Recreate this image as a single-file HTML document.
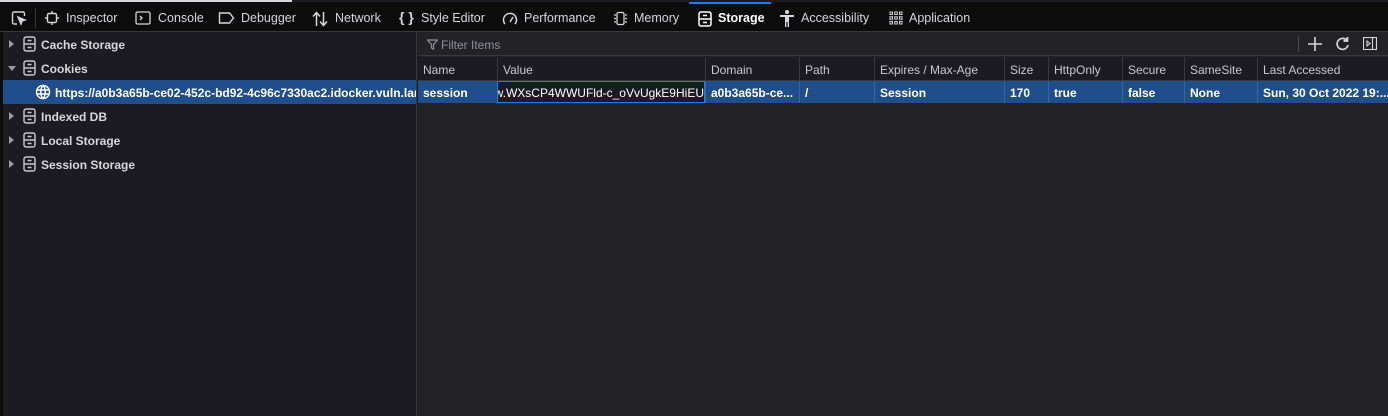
<!DOCTYPE html>
<html><head><meta charset="utf-8"><style>
*{box-sizing:border-box;margin:0;padding:0}
body{width:1388px;height:416px;background:#1c1b22;font-family:"Liberation Sans",sans-serif;font-size:12px;color:#fbfbfe;position:relative;overflow:hidden}
.top{position:absolute;left:0;top:0;width:292px;height:2px;background:#d7d7db}
.tb{position:absolute;left:0;top:2px;width:1388px;height:30px;background:#0c0c0d;border-bottom:1px solid #38383d}
.t{position:absolute;top:9px;color:#d7d7db;font-size:12.5px;white-space:nowrap}
.ic{position:absolute;top:9px}
.side{position:absolute;left:3px;top:32px;width:414px;height:384px;background:#1c1b22;border-right:1px solid #38383d;overflow:hidden}
.lstrip{position:absolute;left:0;top:32px;width:3px;height:384px;background:#0c0c0d}
.r{position:absolute;left:0;width:414px;height:24px;font-weight:bold;color:#d7d7db;font-size:12px;white-space:nowrap;overflow:hidden}
.r .tx{position:absolute;left:38px;top:6px;white-space:nowrap}
.r .ar{position:absolute;left:6px;top:8px;width:0;height:0;border-left:5px solid #9a9aa0;border-top:4px solid transparent;border-bottom:4px solid transparent}
.r .ar.d{left:5px;top:10px;border-top:5px solid #9a9aa0;border-left:4px solid transparent;border-right:4px solid transparent;border-bottom:0}
.r svg{position:absolute;left:20px;top:4px}
.sel{background:#204e8a;color:#fff}
.main{position:absolute;left:418px;top:32px;width:970px;height:384px;background:#232327}
.filt{position:absolute;left:0;top:0;width:970px;height:24px;border-bottom:1px solid #38383d;background:#232327}
.hdr{position:absolute;left:0;top:25px;width:970px;height:24px;border-bottom:1px solid #38383d;background:#1c1b22}
.c{position:absolute;top:0;height:24px;padding:6px 0 0 5px;white-space:nowrap;overflow:hidden;border-left:1px solid #38383d;color:#c8c8cc}
.row{position:absolute;left:0;top:49px;width:970px;height:22px;background:#204e8a}
.row .c{border-left:1px solid #3d63a0;color:#fff;font-weight:bold;padding-top:5px;height:22px}
</style></head><body>
<div class="top"></div>
<div class="tb">
<svg class="ic" style="left:11px;top:8px" width="16" height="16" viewBox="0 0 16 16" fill="none" stroke="#d7d7db" stroke-width="1.4"><path d="M6 14H3a1.5 1.5 0 0 1-1.5-1.5v-9A1.5 1.5 0 0 1 3 2h9a1.5 1.5 0 0 1 1.5 1.5V6"/><path d="M7 7l7 3-3 1-1 3z" fill="#d7d7db"/></svg>
<div style="position:absolute;left:35px;top:6px;width:1px;height:20px;background:#38383d"></div>
<svg class="ic" style="left:45px" width="14" height="14" viewBox="0 0 14 14" fill="none" stroke="#d7d7db" stroke-width="1.4"><rect x="2.5" y="2.5" width="9" height="9" rx="1.5"/><path d="M7 0v2.5M7 11.5V14M0 7h2.5M11.5 7H14"/></svg>
<div class="t" style="left:66px">Inspector</div>
<svg class="ic" style="left:135px" width="16" height="14" viewBox="0 0 16 14" fill="none" stroke="#d7d7db" stroke-width="1.3"><rect x="1" y="1" width="14" height="12" rx="1.5"/><path d="M5 5l2 2-2 2"/></svg>
<div class="t" style="left:158px">Console</div>
<svg class="ic" style="left:218px" width="17" height="14" viewBox="0 0 17 14" fill="none" stroke="#d7d7db" stroke-width="1.4"><path d="M1.5 2h10l4 5-4 5h-10z"/></svg>
<div class="t" style="left:241px">Debugger</div>
<svg class="ic" style="left:312px" width="16" height="16" viewBox="0 0 16 16" fill="none" stroke="#d7d7db" stroke-width="1.5"><path d="M4.5 15V2M1 5.5l3.5-4 3.5 4M11.5 1v13M8 10.5l3.5 4 3.5-4"/></svg>
<div class="t" style="left:335px">Network</div>
<div class="t" style="left:399px;top:7px;font-size:14px;font-weight:bold">{ }</div>
<div class="t" style="left:421px">Style Editor</div>
<svg class="ic" style="left:502px" width="16" height="15" viewBox="0 0 16 15" fill="none" stroke="#d7d7db" stroke-width="1.5"><path d="M3 13A6.5 6.5 0 1 1 13 13"/><path d="M8 11l3-5"/></svg>
<div class="t" style="left:524px">Performance</div>
<svg class="ic" style="left:613px" width="15" height="15" viewBox="0 0 15 15" fill="none" stroke="#d7d7db" stroke-width="1.3"><rect x="4" y="1.5" width="7" height="12" rx="1.5"/><path d="M1 4h2M1 7.5h2M1 11h2M12 4h2M12 7.5h2M12 11h2"/></svg>
<div class="t" style="left:634px">Memory</div>
<div style="position:absolute;left:689px;top:0;width:82px;height:2px;background:#0a84ff"></div>
<svg class="ic" style="left:698px" width="14" height="16" viewBox="0 0 14 16" fill="none" stroke="#fff" stroke-width="1.5"><rect x="1" y="1" width="12" height="14" rx="2"/><path d="M1 8h12M5 4.5h4M5 11.5h4"/></svg>
<div class="t" style="left:718px;color:#fff;font-weight:bold">Storage</div>
<svg class="ic" style="left:780px;top:8px" width="14" height="17" viewBox="0 0 14 17" fill="#d7d7db"><circle cx="7" cy="2" r="2"/><path d="M0 5h14v2H9v10H7.6v-5H6.4v5H5V7H0z"/></svg>
<div class="t" style="left:801px">Accessibility</div>
<svg class="ic" style="left:889px" width="14" height="14" viewBox="0 0 14 14" fill="none" stroke="#d7d7db" stroke-width="1"><rect x="1" y="1" width="2.5" height="2.5"/><rect x="5.75" y="1" width="2.5" height="2.5"/><rect x="10.5" y="1" width="2.5" height="2.5"/><rect x="1" y="5.75" width="2.5" height="2.5"/><rect x="5.75" y="5.75" width="2.5" height="2.5"/><rect x="10.5" y="5.75" width="2.5" height="2.5"/><rect x="1" y="10.5" width="2.5" height="2.5"/><rect x="5.75" y="10.5" width="2.5" height="2.5"/><rect x="10.5" y="10.5" width="2.5" height="2.5"/></svg>
<div class="t" style="left:909px">Application</div>
</div>
<div class="lstrip"></div>
<div class="side">
<div class="r" style="top:0"><span class="ar"></span><svg width="13" height="16" viewBox="0 0 13 16" fill="none" stroke="#c8c8cc" stroke-width="1.4"><rect x="1" y="1" width="11" height="14" rx="2"/><path d="M1 8h11M4.5 4.5h4M4.5 11.5h4"/></svg><span class="tx">Cache Storage</span></div>
<div class="r" style="top:24px"><span class="ar d"></span><svg width="13" height="16" viewBox="0 0 13 16" fill="none" stroke="#c8c8cc" stroke-width="1.4"><rect x="1" y="1" width="11" height="14" rx="2"/><path d="M1 8h11M4.5 4.5h4M4.5 11.5h4"/></svg><span class="tx">Cookies</span></div>
<div class="r sel" style="top:48px"><svg style="left:32px;top:4px" width="16" height="16" viewBox="0 0 16 16" fill="none" stroke="#fff" stroke-width="1.4"><circle cx="8" cy="8" r="6.5"/><path d="M1.5 6h13M1.5 10h13M8 1.5c-3 3-3 10 0 13M8 1.5c3 3 3 10 0 13"/></svg><span class="tx" style="left:52px;color:#fff">https://a0b3a65b-ce02-452c-bd92-4c96c7330ac2.idocker.vuln.land</span></div>
<div class="r" style="top:72px"><span class="ar"></span><svg width="13" height="16" viewBox="0 0 13 16" fill="none" stroke="#c8c8cc" stroke-width="1.4"><rect x="1" y="1" width="11" height="14" rx="2"/><path d="M1 8h11M4.5 4.5h4M4.5 11.5h4"/></svg><span class="tx">Indexed DB</span></div>
<div class="r" style="top:96px"><span class="ar"></span><svg width="13" height="16" viewBox="0 0 13 16" fill="none" stroke="#c8c8cc" stroke-width="1.4"><rect x="1" y="1" width="11" height="14" rx="2"/><path d="M1 8h11M4.5 4.5h4M4.5 11.5h4"/></svg><span class="tx">Local Storage</span></div>
<div class="r" style="top:120px"><span class="ar"></span><svg width="13" height="16" viewBox="0 0 13 16" fill="none" stroke="#c8c8cc" stroke-width="1.4"><rect x="1" y="1" width="11" height="14" rx="2"/><path d="M1 8h11M4.5 4.5h4M4.5 11.5h4"/></svg><span class="tx">Session Storage</span></div>
</div>
<div class="main">
<div class="filt">
<svg style="position:absolute;left:9px;top:7px" width="11" height="11" viewBox="0 0 11 11" fill="none" stroke="#8f8f9d" stroke-width="1.2"><path d="M.5 1h10L6.5 5.5V10l-2-1V5.5z"/></svg>
<span style="position:absolute;left:23px;top:6px;color:#8f8f9d;font-size:12px">Filter Items</span>
<div style="position:absolute;left:880px;top:4px;width:1px;height:16px;background:#4a4a4f"></div>
<svg style="position:absolute;left:890px;top:5px" width="14" height="14" viewBox="0 0 14 14" stroke="#d7d7db" stroke-width="1.6"><path d="M7 0v14M0 7h14"/></svg>
<svg style="position:absolute;left:917px;top:4px" width="16" height="16" viewBox="0 0 16 16" fill="none" stroke="#d7d7db" stroke-width="1.7"><path d="M13 9a5.5 5.5 0 1 1-1.5-5"/><path d="M12.5 1v4h-4" fill="#d7d7db"/></svg>
<svg style="position:absolute;left:945px;top:5px" width="14" height="13" viewBox="0 0 14 13" fill="none" stroke="#d7d7db" stroke-width="1.1"><rect x=".5" y=".5" width="13" height="12"/><path d="M9.5 .5v12M4 4l3 2.5L4 9z"/></svg>
</div>
<div class="hdr">
<div class="c" style="left:0;width:79px;border-left:0">Name</div>
<div class="c" style="left:79px;width:208px">Value</div>
<div class="c" style="left:287px;width:94px">Domain</div>
<div class="c" style="left:381px;width:75px">Path</div>
<div class="c" style="left:456px;width:130px">Expires / Max-Age</div>
<div class="c" style="left:586px;width:44px">Size</div>
<div class="c" style="left:630px;width:74px">HttpOnly</div>
<div class="c" style="left:704px;width:62px">Secure</div>
<div class="c" style="left:766px;width:73px">SameSite</div>
<div class="c" style="left:839px;width:131px">Last Accessed</div>
</div>
<div class="row">
<div class="c" style="left:0;width:79px;border-left:0">session</div>
<div class="c" style="left:79px;width:208px;border:1px solid #0a84ff;background:#1c1b22;padding:4px 0 0 2px;font-weight:normal;direction:rtl;text-align:left">ww.WXsCP4WWUFld-c_oVvUgkE9HiEU</div>
<div class="c" style="left:287px;width:94px">a0b3a65b-ce...</div>
<div class="c" style="left:381px;width:75px">/</div>
<div class="c" style="left:456px;width:130px">Session</div>
<div class="c" style="left:586px;width:44px">170</div>
<div class="c" style="left:630px;width:74px">true</div>
<div class="c" style="left:704px;width:62px">false</div>
<div class="c" style="left:766px;width:73px">None</div>
<div class="c" style="left:839px;width:131px">Sun, 30 Oct 2022 19:...</div>
</div>
</div>
</body></html>
